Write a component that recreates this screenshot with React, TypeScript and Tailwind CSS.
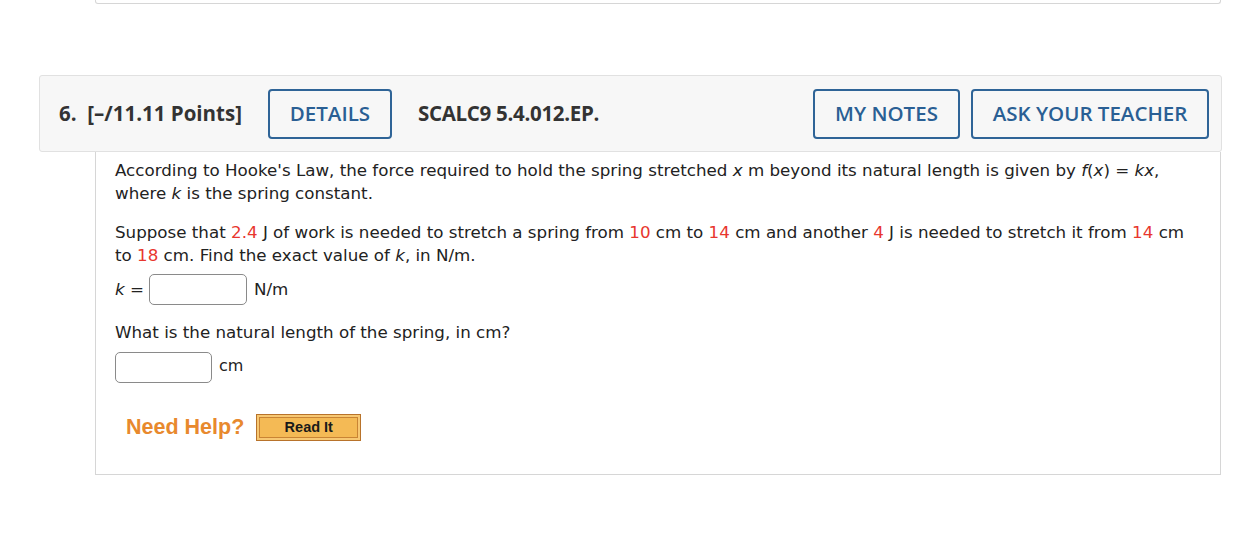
export default function App() {
  const red = "text-[#e8362e]";
  return (
    <div className="w-[1242px] h-[534px] bg-white overflow-hidden">
      {/* previous question card, bottom edge */}
      <div className="ml-[95px] w-[1126px] h-[4px] border-x border-b border-[#d6d6d6] rounded-b-[3px]" />

      {/* header bar */}
      <div className="mt-[71px] ml-[39px] w-[1183px] h-[77px] bg-[#f7f7f7] border border-[#e1e1e1] rounded-[3px] flex items-center pl-[19px] pr-[12px] font-['Open_Sans',sans-serif] text-[20.5px] text-[#333]">
        <span className="font-bold">6.&nbsp; [–/11.11 Points]</span>
        <button className="ml-[26px] h-[50px] w-[124px] border-2 border-[#2f6497] rounded-[4px] text-[#2a5f94] font-semibold">
          DETAILS
        </button>
        <span className="ml-[26px] font-bold tracking-[-0.3px]">SCALC9 5.4.012.EP.</span>
        <div className="ml-auto flex gap-[11px]">
          <button className="h-[50px] w-[147px] border-2 border-[#2f6497] rounded-[4px] text-[#2a5f94] font-semibold">
            MY NOTES
          </button>
          <button className="h-[50px] w-[238px] border-2 border-[#2f6497] rounded-[4px] text-[#2a5f94] font-semibold">
            ASK YOUR TEACHER
          </button>
        </div>
      </div>

      {/* question body */}
      <div className="ml-[95px] w-[1126px] h-[323px] border-x border-b border-[#d6d6d6] pl-[19px] pt-[7px] font-['DejaVu_Sans',Verdana,sans-serif] text-[16.7px] leading-[23px] text-[#222]">
        <p className="whitespace-nowrap">
          According to Hooke's Law, the force required to hold the spring stretched <i>x</i> m beyond its natural length is given by <i>f</i>(<i>x</i>) = <i>kx</i>,
          <br />
          where <i>k</i> is the spring constant.
        </p>
        <p className="mt-[16px] whitespace-nowrap">
          Suppose that <span className={red}>2.4</span> J of work is needed to stretch a spring from <span className={red}>10</span> cm to <span className={red}>14</span> cm and another <span className={red}>4</span> J is needed to stretch it from <span className={red}>14</span> cm
          <br />
          to <span className={red}>18</span> cm. Find the exact value of <i>k</i>, in N/m.
        </p>
        <div className="mt-[7px] flex items-center">
          <span><i>k</i> =</span>
          <div className="ml-[5px] w-[98px] h-[31px] border border-[#8a8a8a] rounded-[5px] bg-white" />
          <span className="ml-[7px]">N/m</span>
        </div>
        <p className="mt-[16px] whitespace-nowrap">What is the natural length of the spring, in cm?</p>
        <div className="mt-[8px] flex items-center">
          <div className="w-[97px] h-[31px] border border-[#8a8a8a] rounded-[5px] bg-white" />
          <span className="ml-[7px] text-[16px] -mt-[4px]">cm</span>
        </div>
        <div className="mt-[31px] ml-[11px] flex items-center font-['Liberation_Sans',Arial,sans-serif]">
          <span className="text-[21.5px] font-bold text-[#e8892d]">Need Help?</span>
          <div className="ml-[12px] w-[105px] h-[27px] border border-[#b8732b] bg-[#f7c873] p-[2px]">
            <div className="w-full h-full border border-[#c98434] bg-[#f4ba55] flex items-center justify-center text-[14.5px] font-bold text-[#1a1a1a]">
              Read It
            </div>
          </div>
        </div>
      </div>
    </div>
  );
}
